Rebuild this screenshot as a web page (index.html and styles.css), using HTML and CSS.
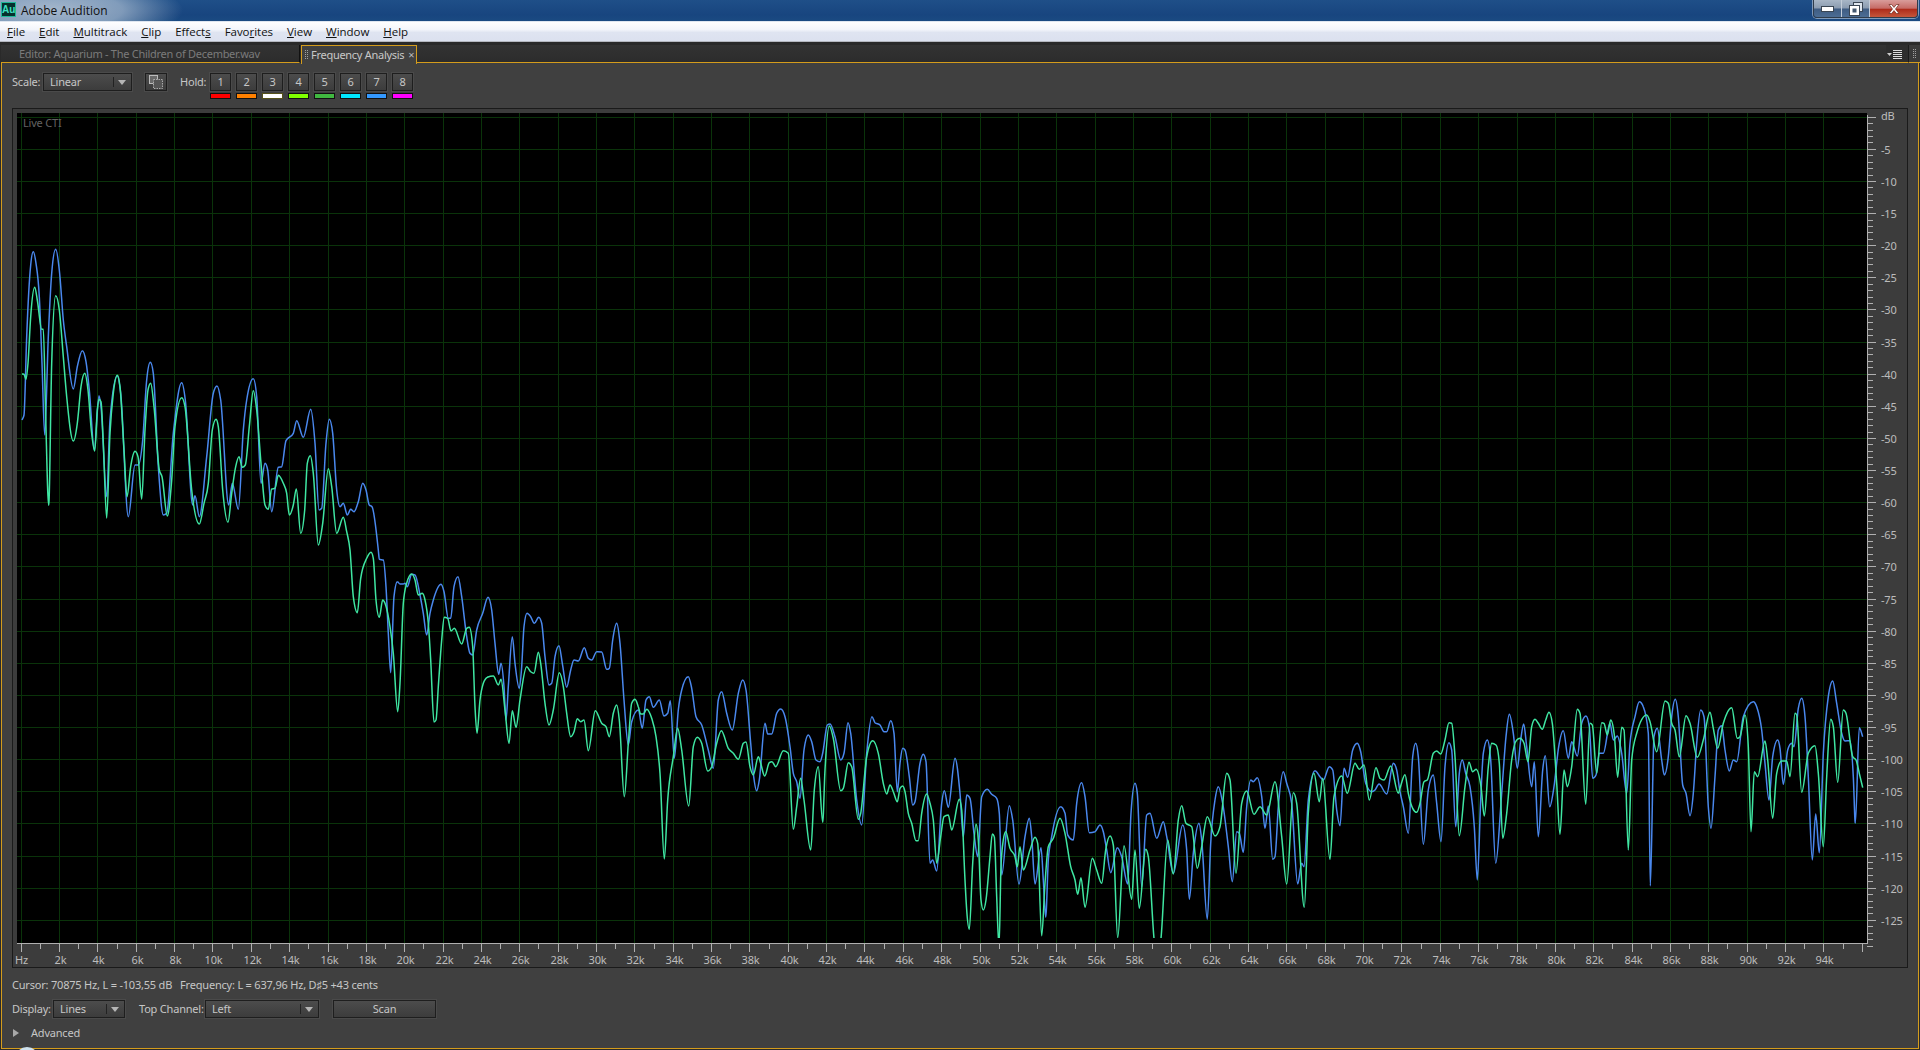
FILE: index.html
```html
<!DOCTYPE html>
<html lang="en">
<head>
<meta charset="utf-8">
<title>Adobe Audition</title>
<link rel="stylesheet" href="styles.css">
</head>
<body>
<div class="app">
  <header class="titlebar">
    <span class="app-icon">Au</span>
    <span class="app-title">Adobe Audition</span>
    <div class="win-buttons">
      <span class="win-btn win-min"><svg width="13" height="6" viewBox="0 0 13 6"><rect x="0.5" y="0.5" width="12" height="5" fill="#fff" stroke="#3a4654"/></svg></span>
      <span class="win-btn win-restore"><svg width="14" height="14" viewBox="0 0 14 14"><rect x="4.5" y="0.5" width="9" height="9" fill="#dfe6ee" stroke="#3a4654"/><rect x="0.5" y="3.5" width="10" height="10" fill="#fff" stroke="#3a4654"/><rect x="3.5" y="6.5" width="4" height="4" fill="#44586f"/></svg></span>
      <span class="win-btn win-close"><svg width="16" height="12" viewBox="0 0 16 12"><path d="M3 1.5h2.6L8 4.4l2.4-2.9H13L9.5 6 13 10.5h-2.6L8 7.6l-2.4 2.9H3L6.5 6z" fill="#fff" stroke="#6e2a20" stroke-width="0.7"/></svg></span>
    </div>
  </header>

  <nav class="menubar">
    <span class="menu-item"><u>F</u>ile</span>
    <span class="menu-item"><u>E</u>dit</span>
    <span class="menu-item"><u>M</u>ultitrack</span>
    <span class="menu-item"><u>C</u>lip</span>
    <span class="menu-item">Effect<u>s</u></span>
    <span class="menu-item">Favo<u>r</u>ites</span>
    <span class="menu-item"><u>V</u>iew</span>
    <span class="menu-item"><u>W</u>indow</span>
    <span class="menu-item"><u>H</u>elp</span>
  </nav>

  <div class="tabbar">
    <div class="tab tab-editor">Editor: Aquarium - The Children of December.wav</div>
    <div class="tab tab-active"><span class="grip"></span><span class="tab-label">Frequency Analysis</span><span class="tab-close">×</span></div>
    <div class="tab-spacer"></div>
    <span class="panel-menu">
      <svg width="15" height="9" viewBox="0 0 15 9"><path d="M0 3h5L2.5 6z" fill="#ccc"/><path d="M6 .5h9M6 2.5h9M6 4.5h9M6 6.5h9M6 8.5h9" stroke="#ddd" stroke-width="1"/></svg>
    </span>
    <div class="tab-end"><span class="grip"></span></div>
  </div>

  <main class="panel">
    <div class="toolbar">
      <span class="label label-scale">Scale:</span>
      <div class="select select-scale"><span class="select-value">Linear</span><span class="select-arrow"></span></div>
      <button class="btn btn-copy" type="button">
        <svg width="14" height="14" viewBox="0 0 14 14"><rect x="0.5" y="0.5" width="8" height="8" fill="#6a6a6a" stroke="#bbb"/><rect x="4.5" y="4.5" width="9" height="9" fill="#555" stroke="#aaa" stroke-dasharray="1.5 1"/></svg>
      </button>
      <span class="label label-hold">Hold:</span>
      <div class="holds">
        <div class="hold"><button class="btn btn-hold" type="button">1</button><span class="swatch s1"></span></div>
        <div class="hold"><button class="btn btn-hold" type="button">2</button><span class="swatch s2"></span></div>
        <div class="hold"><button class="btn btn-hold" type="button">3</button><span class="swatch s3"></span></div>
        <div class="hold"><button class="btn btn-hold" type="button">4</button><span class="swatch s4"></span></div>
        <div class="hold"><button class="btn btn-hold" type="button">5</button><span class="swatch s5"></span></div>
        <div class="hold"><button class="btn btn-hold" type="button">6</button><span class="swatch s6"></span></div>
        <div class="hold"><button class="btn btn-hold" type="button">7</button><span class="swatch s7"></span></div>
        <div class="hold"><button class="btn btn-hold" type="button">8</button><span class="swatch s8"></span></div>
      </div>
    </div>

    <div class="plot-frame">
      <svg id="plot" class="plot" width="1893" height="858" viewBox="13 109 1893 858" xmlns="http://www.w3.org/2000/svg"></svg>
    </div>

    <div class="status">Cursor: 70875 Hz, L = -103,55 dB&nbsp;&nbsp; Frequency: L = 637,96 Hz, D♯5 +43 cents</div>

    <div class="controls">
      <span class="label label-display">Display:</span>
      <div class="select select-display"><span class="select-value">Lines</span><span class="select-arrow"></span></div>
      <span class="label label-channel">Top Channel:</span>
      <div class="select select-channel"><span class="select-value">Left</span><span class="select-arrow"></span></div>
      <button class="btn btn-scan" type="button">Scan</button>
    </div>

    <div class="advanced"><span class="disclosure"></span><span>Advanced</span></div>
  </main>
</div>
<span class="start-orb"></span>
<script src="chart.js"></script>
</body>
</html>
```

FILE: styles.css
```css
* { box-sizing: border-box; }
html, body { margin: 0; padding: 0; }
body {
  width: 1920px;
  height: 1050px;
  overflow: hidden;
  position: relative;
  background: #2b2b2b;
  font-family: "Noto Sans", "Open Sans", sans-serif;
}
.app { display: flex; flex-direction: column; width: 1920px; height: 1050px; }

/* window chrome */
.titlebar {
  flex: 0 0 21px;
  display: flex;
  align-items: flex-start;
  padding-left: 1px;
  background:
    radial-gradient(ellipse 135px 34px at 48px 10px, rgba(205,215,225,.78) 0%, rgba(190,205,220,.62) 55%, rgba(150,175,205,0) 100%),
    linear-gradient(#1f4f88, #18457f 70%, #1a4a82);
  border-bottom: 1px solid #dfe6f0;
}
.app-icon {
  width: 15px;
  height: 15px;
  margin-top: 2px;
  border: 1px solid #1fb89a;
  background: #06302e;
  color: #3fe0c2;
  font: bold 10px/13px "Liberation Sans", sans-serif;
  text-align: center;
}
.app-title {
  margin-left: 5px;
  padding-top: 1px;
  font: 12px/20px "Open Sans", sans-serif;
  color: #111;
}
.win-buttons {
  margin-left: auto;
  margin-right: 2px;
  display: flex;
  height: 18px;
  border: 1px solid #2f3c4b;
  border-top: 0;
  border-radius: 0 0 4px 4px;
  overflow: hidden;
  box-shadow: 0 0 0 1px rgba(255,255,255,.45);
}
.win-btn { display: flex; align-items: center; justify-content: center; height: 100%; }
.win-min, .win-restore {
  width: 28px;
  background: linear-gradient(#a8b6c6 0%, #8a9bb0 48%, #3f5c82 52%, #4c6d94 100%);
  border-right: 1px solid #c2ccd8;
}
.win-close {
  width: 47px;
  background: linear-gradient(#d99d9b 0%, #c66b66 48%, #ae2c1b 55%, #c5563b 100%);
}

.menubar {
  flex: 0 0 20px;
  display: flex;
  gap: 14px;
  align-items: center;
  padding: 1px 0 0 7px;
  background: linear-gradient(#fefeff 0%, #f3f5fb 40%, #dfe4f1 55%, #dce1ef 100%);
  border-bottom: 1px solid #b5b8c0;
  font: 11.5px/18px "Open Sans", sans-serif;
  letter-spacing: -0.03px;
  color: #111;
}

/* tab strip */
.tabbar {
  flex: 0 0 21px;
  height: 21px;
  display: flex;
  align-items: stretch;
  padding: 3px 0 0 1px;
  background: #2a2a2a;
}
.tab { font-size: 11px; line-height: 18px; letter-spacing: -0.28px; white-space: nowrap; flex-shrink: 0; }
.tab-editor {
  width: 299px;
  padding-left: 18px;
  color: #7b7b7b;
  background: linear-gradient(#333, #2c2c2c);
  border-bottom: 1px solid #d49c1c;
  border-right: 1px solid #111;
}
.tab-active {
  width: 116px;
  margin-left: 1px;
  display: flex;
  align-items: center;
  padding-left: 3px;
  color: #c8c8c8;
  background: #404040;
  border: 1px solid #d49c1c;
  border-bottom: 0;
  position: relative;
  z-index: 1;
  margin-bottom: -1px;
}
.grip {
  width: 3px;
  height: 10px;
  flex-shrink: 0;
  background-image:
    linear-gradient(90deg, transparent 1px, #404040 1px 2px, transparent 2px),
    repeating-linear-gradient(#a0a0a0 0 1px, transparent 1px 2px);
}
.tab-label { margin-left: 3px; white-space: nowrap; }
.tab-close { margin-left: 4px; color: #bbb; font-size: 11px; }
.tab-spacer { flex: 1; border-bottom: 1px solid #d49c1c; background: linear-gradient(#333, #2c2c2c); }
.panel-menu {
  width: 22px;
  padding: 5px 0 0 1px;
  background: #2e2e2e;
  border-bottom: 1px solid #d49c1c;
}
.panel-menu svg { display: block; }
.tab-end {
  width: 12px;
  margin-left: 0;
  display: flex;
  justify-content: center;
  align-items: center;
  background: #3a3a3a;
  border-left: 1px solid #1c1c1c;
  border-bottom: 1px solid #d49c1c;
}

/* panel */
.panel {
  flex: 0 0 986px;
  display: flex;
  flex-direction: column;
  margin-left: 1px;
  width: 1918px;
  background: #404040;
  border: 1px solid #d49c1c;
  border-top: 0;
  color: #c6c6c6;
  font-size: 11px;
  line-height: 18px;
  letter-spacing: -0.2px;
}
.toolbar {
  flex: 0 0 45px;
  display: flex;
  align-items: flex-start;
  padding: 10px 0 0 10px;
}
.label { display: block; white-space: nowrap; }
.label-scale { width: 31px; }
.label-hold { width: 30px; margin-left: 13px; }
.label-display { width: 41px; }
.label-channel { width: 66px; margin-left: 14px; }

.select, .btn {
  height: 18px;
  border: 1px solid #1e1e1e;
  background: linear-gradient(#4c4c4c, #3c3c3c);
  box-shadow: 0 0 0 1px #4a4a4a;
  color: #c6c6c6;
  font: inherit;
  letter-spacing: inherit;
  padding: 0;
}
.select { display: flex; align-items: stretch; }
.select-value { flex: 1; padding-left: 6px; line-height: 16px; }
.select-arrow {
  position: relative;
  width: 18px;
}
.select-arrow::before {
  content: "";
  position: absolute;
  left: 0;
  top: 3px;
  height: 10px;
  border-left: 1px solid #222;
}
.select-arrow::after {
  content: "";
  position: absolute;
  left: 5px;
  top: 6px;
  border-left: 4px solid transparent;
  border-right: 4px solid transparent;
  border-top: 5px solid #b5b5b5;
}
.select-scale { width: 89px; }
.select-display { width: 72px; }
.select-channel { width: 114px; }

.btn { display: flex; align-items: center; justify-content: center; line-height: 16px; }
.btn-copy { width: 22px; margin-left: 13px; }
.holds { display: flex; gap: 5px; }
.hold { display: flex; flex-direction: column; gap: 2px; width: 21px; }
.btn-hold { width: 21px; }
.swatch { display: block; height: 6px; border: 1px solid #111; }
.s1 { background: #ff0000; }
.s2 { background: #ff8000; }
.s3 { background: #ffffff; border-color: #55521a; }
.s4 { background: #80ff00; }
.s5 { background: #40b840; }
.s6 { background: #00e8ff; }
.s7 { background: #3399ff; }
.s8 { background: #ff00ff; }

.plot-frame {
  flex: 0 0 860px;
  margin: 0 10px;
  border: 1px solid #1a1a1a;
  background: #3c3c3c;
}
.plot { display: block; }
.plot-bg { fill: #000; }
.grid-line { stroke: #0a330a; stroke-width: 1; shape-rendering: crispEdges; }
.axis-line { stroke: #b0b0b0; stroke-width: 1; shape-rendering: crispEdges; }
.tick { stroke: #b0b0b0; stroke-width: 1; shape-rendering: crispEdges; }
.axis-text { fill: #bcbcbc; font: 11px "Noto Sans", "Open Sans", sans-serif; }
.live-cti { fill: #636363; font: 11px "Noto Sans", "Open Sans", sans-serif; }
.trace { fill: none; stroke-width: 1.5; stroke-linejoin: round; }
.trace-left { stroke: #3fe6a2; }
.trace-right { stroke: #4a88ee; }

.status {
  flex: 0 0 32px;
  padding: 8px 0 0 10px;
  line-height: 17px;
  white-space: nowrap;
}
.controls { flex: 0 0 18px; display: flex; align-items: flex-start; padding-left: 10px; }
.btn-scan { width: 103px; margin-left: 14px; }
.advanced {
  margin-top: 6px;
  display: flex;
  align-items: center;
  flex: 0 0 18px;
  height: 18px;
  padding-left: 11px;
}
.disclosure {
  width: 0;
  height: 0;
  margin-right: 12px;
  border-top: 4px solid transparent;
  border-bottom: 4px solid transparent;
  border-left: 6px solid #a8a8a8;
}
.start-orb {
  position: absolute;
  left: 15px;
  top: 1047px;
  width: 24px;
  height: 24px;
  border-radius: 50%;
  background: #cfe2ee;
}
```

FILE: chart.js
```js
(function () {
  var NS = "http://www.w3.org/2000/svg";
  var svg = document.getElementById("plot");

  function el(name, attrs, parent, text) {
    var n = document.createElementNS(NS, name);
    for (var k in attrs) n.setAttribute(k, attrs[k]);
    if (text !== undefined) n.textContent = text;
    (parent || svg).appendChild(n);
    return n;
  }
  function xAt(kHz) { return Math.floor(21.2 + 19.177 * kHz) + 0.5; }
  function yAt(db) { return Math.floor(117.2 + 6.425 * db) + 0.5; }

  var defs = el("defs", {});
  var clip = el("clipPath", { id: "plot-clip" }, defs);
  el("rect", { x: 17, y: 113, width: 1850, height: 825 }, clip);

  el("rect", { class: "plot-bg", x: 17, y: 113, width: 1850, height: 830 });

  var k, d;
  for (k = 0; k <= 94; k += 2) el("line", { class: "grid-line", x1: xAt(k), x2: xAt(k), y1: 113, y2: 943 });
  for (d = 0; d <= 125; d += 5) el("line", { class: "grid-line", x1: 17, x2: 1867, y1: yAt(d), y2: yAt(d) });

  el("text", { class: "live-cti", x: 23, y: 127 }, svg, "Live CTI");

  // bottom axis
  el("line", { class: "axis-line", x1: 17, x2: 1868, y1: 943.5, y2: 943.5 });
  for (k = 0; k <= 96; k++) {
    var major = k % 2 === 0;
    el("line", { class: "tick", x1: xAt(k), x2: xAt(k), y1: 943, y2: major ? 952 : 949 });
    if (major && k > 0 && k < 96) {
      el("text", { class: "axis-text", x: xAt(k) + 1, y: 964, "text-anchor": "middle" }, svg, k + "k");
    }
  }
  el("text", { class: "axis-text", x: 15, y: 964 }, svg, "Hz");

  // right axis
  el("line", { class: "axis-line", x1: 1867.5, x2: 1867.5, y1: 115, y2: 943 });
  for (d = 0; d <= 129; d++) {
    var big = d % 5 === 0;
    el("line", { class: "tick", x1: 1867, x2: big ? 1876 : 1873, y1: yAt(d), y2: yAt(d) });
    if (big && d > 0) {
      el("text", { class: "axis-text", x: 1881, y: yAt(d) + 4 }, svg, "-" + d);
    }
  }
  el("text", { class: "axis-text", x: 1881, y: 120 }, svg, "dB");

  // traces: [originX, originY, zx, zy, zx, zy, ...] at 3x scale
  function build(segments) {
    var pts = [];
    segments.forEach(function (s) {
      var ox = s[0], oy = s[1], a = s[2];
      for (var i = 0; i < a.length; i += 2) {
        var X = ox + a[i] / 3, Y = oy + a[i + 1] / 3;
        if (!pts.length || X > pts[pts.length - 1][0] + 0.05) pts.push([X, Y]);
      }
    });
    return pts;
  }
  function monotonePath(p) {
    var n = p.length, m = [], t = [], i;
    for (i = 0; i < n - 1; i++) m[i] = (p[i + 1][1] - p[i][1]) / (p[i + 1][0] - p[i][0]);
    t[0] = m[0];
    t[n - 1] = m[n - 2];
    for (i = 1; i < n - 1; i++) {
      if (m[i - 1] * m[i] <= 0) { t[i] = 0; continue; }
      var h0 = p[i][0] - p[i - 1][0], h1 = p[i + 1][0] - p[i][0];
      t[i] = (m[i - 1] * h1 + m[i] * h0) / (h0 + h1);
      var lim = 2 * Math.min(Math.abs(m[i - 1]), Math.abs(m[i]));
      if (Math.abs(t[i]) > lim) t[i] = (t[i] > 0 ? 1 : -1) * lim;
    }
    var dStr = "M" + p[0][0].toFixed(1) + " " + p[0][1].toFixed(1);
    for (i = 0; i < n - 1; i++) {
      var h = (p[i + 1][0] - p[i][0]) / 3;
      dStr += "C" + (p[i][0] + h).toFixed(2) + " " + (p[i][1] + t[i] * h).toFixed(2) + " " +
        (p[i + 1][0] - h).toFixed(2) + " " + (p[i + 1][1] - t[i + 1] * h).toFixed(2) + " " +
        p[i + 1][0].toFixed(1) + " " + p[i + 1][1].toFixed(1);
    }
    return dStr;
  }

  var right = build([
    [0, 230, [66,570,72,555,80,320,92,105,100,65,108,100,118,200,126,400,134,615,145,320,155,130,167,58,178,120,190,270,200,350,220,477,232,410,247,362,258,395,268,480,283,660,297,497,303,530,320,800,330,570,352,437,362,490,385,860,405,705,415,705,428,630,440,450,451,397,460,430,475,710,490,855,500,850,520,610,545,458,556,510,578,825,585,797,598,860,620,680,640,490,651,468,662,510,686,825,697,760,715,838,730,600,740,510,760,446,770,500,783,760,795,700,803,720,815,845,835,712,845,710,858,632,880,610,890,572,910,622,932,538,945,640,957,840,965,835,978,640,988,568,998,610,1010,780,1020,830,1030,820,1042,855,1052,838,1062,845,1075,815,1088,760,1098,780,1108,825,1116,830,1135,960]],
    [350, 520, [88,118,100,120,108,200,115,340,122,458,132,230,142,185]],
    [400, 480, [0,312,10,312,15,310,22,320,35,283,45,285,60,345,70,400,80,465,90,400,100,360,123,313,132,335,145,415,152,415,162,320,174,290,185,350,200,470,210,520,218,525,230,450,248,400,264,352,275,390,285,490,296,583,303,550,312,620,318,720,325,620,337,470,345,550,358,625,365,560,372,440,381,400,392,410,403,430,416,412,425,430,435,530,447,615,455,610,465,530,477,497,487,550,500,622,512,570,522,540,535,543,553,503,565,535,575,540,590,515,605,516,620,568,628,565,638,480,650,430,660,490,672,660,685,795,695,725,715,690,727,745,738,660,748,650,760,682,778,660,792,708,803,700,811,662,823,835,835,690,845,630,865,590,875,625,888,710,905,735,925,810,940,865,955,660,965,635,980,700,997,750,1015,640,1028,600,1038,630,1052,790,1060,880,1070,932,1078,900,1095,730,1103,762,1115,762,1130,700,1142,687,1155,710,1170,800,1180,880,1190,905,1200,955,1212,810,1225,765,1235,785,1248,840,1260,845,1268,820,1282,735,1290,732,1305,770,1322,840,1332,820,1344,728,1352,760,1370,960,1385,1035,1400,820,1416,710,1425,728,1440,735,1452,755,1460,755,1472,722,1482,760,1492,935]],
    [900, 680, [0,250,8,205,15,210,28,290,38,375,45,365,60,250,70,223,78,245,90,550,98,540,110,573,125,370,133,332,145,382,165,235,180,340,190,470,200,345,210,355,222,460,233,530,245,350,262,328,275,343,290,355,298,400,305,585,328,377,338,420,357,612,375,470,388,415,395,470,405,612,423,503,430,600,437,712,445,540,455,470,482,380,495,400,503,465,520,480,530,370,545,308,555,350,568,458,585,455,600,435,610,455,620,510,632,578,652,503,665,530,683,612,693,400,705,310,712,340,725,620,740,405,750,400,770,475,790,425,800,470,820,580,848,435,860,510,868,658,880,520,897,430,905,480,922,718,932,490,945,360,955,320,968,370,985,500,997,605,1010,455,1018,460,1030,517,1040,380,1052,300,1060,305,1072,293,1085,350,1095,445,1105,378,1118,538,1125,530,1135,380,1150,275,1160,310,1175,370,1193,612,1205,550,1212,560,1225,360,1245,272,1260,290,1270,300,1288,260,1298,270,1310,390,1320,437,1332,265,1343,292,1358,210,1372,190,1382,215,1397,310,1415,335,1425,330,1437,312,1460,342,1480,250,1490,270]],
    [1400, 660, [0,395,10,440,25,520,38,290,47,250,55,290,70,553,85,390,100,345,110,430,123,545,135,320,147,248,155,270,167,500,178,340,187,300,197,340,210,380,223,500,232,660,242,420,250,280,262,240,272,300,287,610,305,400,318,230,328,163,340,220,352,325,362,240,371,192,380,260,395,380,403,305,415,530,428,330,436,287,449,440,462,380,476,260,490,212,505,295,515,245,532,288,545,190,558,168,568,200,578,355,588,345,598,280,610,280,630,190,640,240,652,228,665,280,680,400,690,250,705,170,718,125,730,140,745,220,751,677,762,230,772,205,785,300,793,345,805,290,815,170,826,118,835,170,848,375,858,400,870,467,880,400,890,250,902,150,912,170,925,440,933,505,945,350,955,210,965,197,975,270,988,333,1000,300,1010,305,1030,170,1060,125,1070,140,1085,210,1095,310,1107,420,1118,290,1133,240,1140,265,1150,373,1163,270,1175,250,1182,260,1195,145,1205,115,1215,170,1225,350,1237,600,1247,462,1258,578,1270,280,1285,110,1298,63,1310,130,1325,220,1335,243,1350,242,1360,350,1366,490,1378,203,1388,230]]
  ]);

  var left = build([
    [0, 230, [66,432,72,433,78,448,84,400,92,260,104,172,112,210,125,298,130,298,137,560,146,826,155,400,167,197,178,240,190,380,200,500,220,633,232,580,243,470,254,430,264,480,274,600,284,663,292,540,297,508,303,515,310,640,320,865,330,610,340,490,352,436,360,470,372,660,381,800,392,710,405,664,414,680,425,808,435,600,444,480,452,460,462,530,478,720,486,740,502,858,515,750,525,590,545,503,555,530,575,780,598,882,612,820,625,760,637,600,648,568,655,590,668,780,684,877,695,790,707,710,717,680,727,712,736,705,748,590,760,482,770,540,783,700,795,825,805,838,815,777,825,775,835,736,850,760,860,790,868,855,880,825,889,777,902,910,914,840,922,700,931,677,940,730,955,945,968,880,985,716,995,770,1010,910,1030,862,1040,905,1050,960]],
    [350, 520, [10,230,22,278,32,175,50,115,63,97,70,115,78,240,88,292,98,240,105,250,120,320,130,400,143,575]],
    [400, 480, [0,610,10,370,20,310,35,282,45,300,55,345,67,340,75,360,85,430,92,540,102,726,108,720,115,620,125,480,133,412,143,415,153,453,163,445,185,492,200,445,208,442,218,500,225,680,231,760,240,660,250,610,262,592,280,588,295,615,303,598,315,690,327,790,337,692,348,742,360,660,380,560,392,575,402,580,415,517,422,550,435,670,447,735,460,690,478,578,490,620,500,700,512,770,522,755,532,716,542,725,552,720,565,812,586,692,605,730,618,740,628,770,640,700,650,675,658,720,673,950,685,790,695,670,705,658,715,680,722,702,730,702,740,688,755,715,768,770,780,880,793,1137,803,960,820,830,833,745,845,810,866,978,880,800,892,772,905,790,923,873,935,860,950,790,964,752,985,805,1000,820,1015,838,1030,790,1038,786,1050,860,1060,885,1075,830,1082,850,1094,888,1108,848,1116,845,1127,860,1150,812,1165,820,1180,1048,1190,980,1202,895,1212,960,1232,1110,1243,930,1255,860,1268,1027,1275,870,1288,738,1300,775,1322,932,1330,925,1345,848,1355,860,1375,1018,1382,1000,1400,830,1418,782,1435,820,1450,910,1460,942,1470,915,1480,935,1492,965]],
    [900, 680, [0,325,8,318,15,335,25,400,35,430,48,482,55,482,65,400,80,342,90,370,100,420,110,550,122,470,132,410,145,405,155,450,178,358,185,390,195,600,200,690,208,748,218,550,228,433,235,480,243,660,250,690,258,660,270,530,277,462,283,470,290,650,297,800,303,560,310,480,317,455,330,505,345,530,352,560,360,500,370,570,390,510,405,472,413,490,425,767,435,610,445,500,460,475,480,415,495,460,512,560,525,600,533,643,543,593,555,682,577,535,590,570,605,610,617,510,630,468,640,495,653,773,672,497,695,658,705,510,718,685,737,508,745,530,762,775,771,850,783,775,803,480,820,582,835,420,845,377,858,430,875,440,892,565,905,500,922,410,945,468,960,440,980,280,990,300,1008,580,1025,370,1040,333,1062,403,1080,380,1100,405,1125,305,1145,470,1160,612,1180,338,1190,370,1213,682,1225,400,1242,280,1258,365,1268,295,1290,538,1302,350,1325,288,1342,340,1365,250,1378,268,1392,255,1408,360,1428,263,1440,295,1452,300,1472,258,1495,340]],
    [1400, 660, [0,385,15,344,25,400,38,445,50,457,60,430,72,365,82,360,100,280,110,273,122,282,135,240,147,188,155,190,165,290,178,527,195,380,207,307,218,335,228,328,243,380,253,468,265,320,275,250,288,255,298,310,308,535,320,460,335,300,350,240,360,235,372,250,384,305,395,200,405,178,415,190,427,208,437,180,447,157,457,190,470,370,480,523,492,330,502,380,515,320,532,148,540,160,557,433,570,190,577,195,590,340,605,188,612,190,622,225,632,180,643,225,653,352,665,202,672,210,685,570,695,300,710,220,740,165,750,185,770,275,795,123,805,130,815,190,825,210,838,290,858,167,870,190,892,292,910,240,930,157,940,205,953,265,970,190,995,143,1012,235,1020,230,1035,165,1045,260,1053,515,1063,335,1073,350,1095,243,1103,300,1118,475,1130,340,1145,303,1160,303,1170,350,1185,160,1190,165,1205,397,1225,280,1245,257,1255,340,1270,560,1280,350,1292,178,1300,200,1313,367,1330,150,1338,160,1358,290,1368,300,1378,340,1388,383]]
  ]);

  var traces = el("g", { "clip-path": "url(#plot-clip)" });
  el("path", { class: "trace trace-right", d: monotonePath(right) }, traces);
  el("path", { class: "trace trace-left", d: monotonePath(left) }, traces);
})();
```
